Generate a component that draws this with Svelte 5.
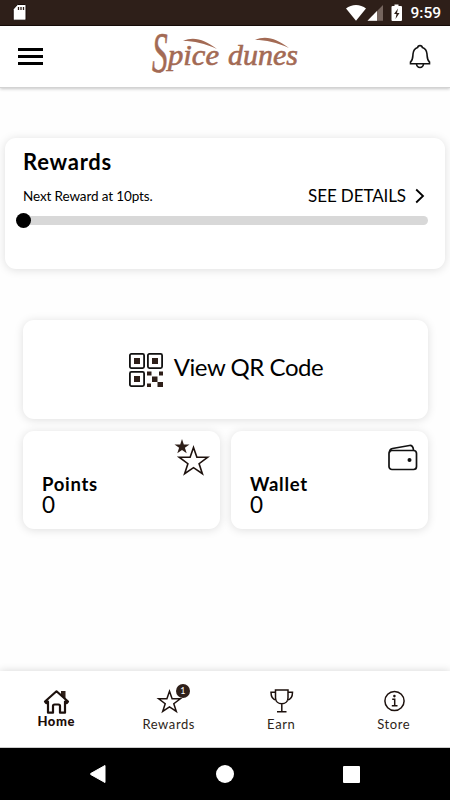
<script lang="ts">
	type Tab = { id: string; label: string; badge?: number };

	const tabs: Tab[] = [
		{ id: 'home', label: 'Home' },
		{ id: 'rewards', label: 'Rewards', badge: 1 },
		{ id: 'earn', label: 'Earn' },
		{ id: 'store', label: 'Store' }
	];

	let active = $state('home');
	let points = $state(0);
	let wallet = $state(0);

	const nextReward = 10;
	const progress = $derived(Math.min(points / nextReward, 1) * 100);
</script>

<div class="screen">
	<div class="status">
		<svg class="sd" width="16" height="20" viewBox="0 0 16 20">
			<path d="M5.6 1.5H13q1 0 1 1v13.700q0 1-1 1H2.200q-1 0-1-1V6.200z" fill="#fff" stroke="#170b08" />
			<path d="M6.500 4v3M9 4v3M11.500 4v3" stroke="#2e1f19" stroke-width="1.300" />
		</svg>
		<svg width="58" height="20" viewBox="0 0 58 20">
			<path d="M0 5.500C5.500 .8 14.500 .8 20 5.500L10 17.700z" fill="#fff" />
			<path d="M37 2v15.700H21.500z" fill="#75655e" />
			<path d="M31 8v9.700h-9.500z" fill="#fff" />
			<path d="M48.500 1.500h4v1.500h2.500q1 0 1 1v13q0 1-1 1h-8.500q-1 0-1-1V4q0-1 1-1h2z" fill="#fff" />
			<path d="M52 5.500l-4 5.500h2.500l-1 5 4-6h-2.500z" fill="#2e1f19" />
		</svg>
		<span class="time">9:59</span>
	</div>

	<header>
		<button type="button" class="menu" aria-label="Menu">
			<i></i><i></i><i></i>
		</button>
		<svg class="logo" width="150" height="44" viewBox="0 0 150 44" aria-label="Spice dunes">
			<g fill="#a36a54" stroke="#a36a54" stroke-width=".6">
				<text transform="translate(1 38) scale(.56 1)" font-size="56">S</text>
				<text x="17" y="31" font-size="29" textLength="51" lengthAdjust="spacingAndGlyphs">pice</text>
				<text x="77" y="31" font-size="29" textLength="70" lengthAdjust="spacingAndGlyphs">dunes</text>
			</g>
			<path
				d="M32 7C43 2 54 6 66 15C54 9.500 43 7 32 7zM104 6C115 1 126 5 138 14C126 8.500 115 6 104 6z"
				fill="#a36a54"
			/>
		</svg>
		<button type="button" class="bell" aria-label="Notifications">
			<svg width="24" height="28" viewBox="0 0 24 28" fill="none" stroke="#111" stroke-width="1.600">
				<path
					d="M2.500 20.700V19C5 17 4.700 14.500 5 11C5.300 7.500 7 5.300 9.700 4.500C9.900 2 14.100 2 14.300 4.500C17 5.300 18.700 7.500 19 11C19.300 14.500 19 17 21.500 19v1.700z"
				/>
				<path d="M8.500 21c.5 4.600 6.500 4.600 7 0" />
			</svg>
		</button>
	</header>

	<main>
		<section class="card rewards">
			<h2>Rewards</h2>
			<div class="row">
				<span class="next">Next Reward at {nextReward}pts.</span>
				<a href="#details" class="details">
					<span>SEE DETAILS</span>
					<svg width="10" height="16" viewBox="0 0 10 16" fill="none" stroke="#000" stroke-width="1.800">
						<path d="M1.200 1.500L8 8l-6.800 6.500" />
					</svg>
				</a>
			</div>
			<div class="track">
				<span class="thumb" style="left: {progress}%"></span>
			</div>
		</section>

		<button type="button" class="card qr">
			<svg width="34" height="34" viewBox="0 0 34 34" fill="none" stroke="#111" stroke-width="1.800">
				<rect x=".9" y=".9" width="14.200" height="14.200" rx="1.500" />
				<rect x="18.900" y=".9" width="14.200" height="14.200" rx="1.500" />
				<rect x=".9" y="18.900" width="14.200" height="14.200" rx="1.500" />
				<path
					d="M5 5h6v6H5zM23 5h6v6h-6zM5 23h6v6H5zM18 18.500h4.500v4H18zM30 18.500h4v4h-4zM23 23.500h5.500v5.500H23zM18 30.500h4v3.500h-4zM28.500 29h5.500v5h-5.500z"
					fill="#2e1f19"
					stroke="none"
				/>
			</svg>
			<span>View QR Code</span>
		</button>

		<div class="tiles">
			<section class="card tile">
				<svg class="stars" width="36" height="38" viewBox="0 0 36 38">
					<path
						d="M8 0l1.800 5.400h5.700l-4.600 3.400 1.800 5.400L8 10.900l-4.700 3.300 1.800-5.400L.5 5.400h5.700z"
						fill="#2e1f19"
					/>
					<path
						d="M19.500 8.500l3.400 9.700h10.900l-8.700 6.500 3.300 10-8.900-6-8.900 6 3.300-10-8.700-6.500h10.900z"
						fill="none"
						stroke="#1d110d"
						stroke-width="1.600"
					/>
				</svg>
				<h3>Points</h3>
				<p>{points}</p>
			</section>
			<section class="card tile">
				<svg class="purse" width="30" height="27" viewBox="0 0 30 27" fill="none" stroke="#111" stroke-width="1.700">
					<rect x="1" y="6.500" width="27.500" height="19" rx="3" />
					<path d="M1.500 8.500Q1.500 5 4.500 4.500L21.500 1.500Q25 1 25.500 6" />
					<circle cx="21.500" cy="16" r="2" fill="#111" stroke="none" />
				</svg>
				<h3>Wallet</h3>
				<p>{wallet}</p>
			</section>
		</div>
	</main>

	<nav>
		{#each tabs as tab}
			<button type="button" class="tab" class:active={active === tab.id} onclick={() => (active = tab.id)}>
				<span class="icon">
					<svg width="28" height="26" viewBox="0 0 28 26" fill="none" stroke="#1d110d" stroke-width="1.500">
						{#if tab.id === 'home'}
							<path d="M19 3h4.500v8L19 7z" fill="#2e1f19" stroke="none" />
							<path
								d="M3 13.500L14.500 3.300L26 13.500l-1.200 1.500L23 13.700V24.700h-5v-6.700q0-1.500-1.500-1.500h-4q-1.500 0-1.500 1.500v6.700H6V13.700L4.200 15z"
								stroke-width="2.200"
								stroke-linejoin="round"
							/>
						{:else if tab.id === 'rewards'}
							<path d="M14.500 3.200l2.600 7.600h8.200l-6.500 4.900 2.500 7.700-6.800-4.600-6.800 4.600 2.500-7.700-6.500-4.900h8.200z" />
						{:else if tab.id === 'earn'}
							<path
								d="M8.500 2h12.500v7.800c0 8-12.500 8-12.500 0zM14.800 15.900v7.600M10 23.700h9.500M8.500 4.300H4c0 5 2 7.500 5.500 8M21 4.300h4.500c0 5-2 7.500-5.500 8"
							/>
						{:else}
							<circle cx="14.500" cy="13" r="9.600" />
							<path d="M12.200 11.300h2.500v6.300M11.800 17.700h5.700" />
							<circle cx="14.400" cy="8.100" r="1.300" fill="#1d110d" stroke="none" />
						{/if}
					</svg>
					{#if tab.badge}
						<span class="badge">{tab.badge}</span>
					{/if}
				</span>
				<span class="label">{tab.label}</span>
			</button>
		{/each}
	</nav>

	<div class="system">
		<svg width="16" height="18" viewBox="0 0 16 18"><path d="M15 .5v17L.7 9.500V8.500z" fill="#fff" stroke="#fff" stroke-linejoin="round" /></svg>
		<svg width="18" height="18" viewBox="0 0 18 18"><circle cx="9" cy="9" r="9" fill="#fff" /></svg>
		<svg width="17" height="17" viewBox="0 0 17 17"><rect width="17" height="17" rx="1" fill="#fff" /></svg>
	</div>
</div>

<style>
	:global(*) {
		box-sizing: border-box;
	}
	:global(body) {
		margin: 0;
		background: #fff;
	}
	.screen {
		height: 800px;
		display: flex;
		flex-direction: column;
		overflow: hidden;
		color: #000;
		background: #fefefe;
		font-family: Lato, 'Liberation Sans', sans-serif;
	}
	svg {
		display: block;
		flex: none;
	}
	button {
		border: none;
		padding: 0;
		background: none;
		color: inherit;
		font-family: inherit;
		cursor: pointer;
	}
	.status {
		height: 26px;
		flex: none;
		display: flex;
		align-items: center;
		padding: 1px 9px 0 12px;
		background: #2e1f19;
		border-bottom: 1px solid #160c09;
		color: #fff;
	}
	.sd {
		margin-right: auto;
	}
	.time {
		margin-left: 6px;
		font: 500 15.5px Roboto, sans-serif;
	}
	header {
		height: 62px;
		flex: none;
		display: flex;
		align-items: center;
		justify-content: space-between;
		padding: 0 18px;
		background: #fff;
		border-bottom: 1px solid #d3d3d3;
		box-shadow: 0 1px 3px rgba(0, 0, 0, 0.22);
	}
	.menu {
		display: flex;
		flex-direction: column;
		gap: 4px;
	}
	.menu i {
		width: 25px;
		height: 3px;
		background: #000;
	}
	.logo {
		margin-top: -1px;
		overflow: visible;
		font-family: 'Liberation Serif', serif;
		font-style: italic;
	}
	main {
		flex: 1;
		display: flex;
		flex-direction: column;
		padding: 50px 22px 0 23px;
	}
	.card {
		background: #fff;
		border-radius: 11px;
		box-shadow: 0 1px 10px rgba(0, 0, 0, 0.13);
	}
	.rewards {
		height: 131px;
		margin: 0 -17px 51px -18px;
		padding: 11px 17px 0 18px;
	}
	h2 {
		margin: 0;
		font-size: 22px;
		line-height: 26px;
		letter-spacing: 0.75px;
	}
	.row {
		height: 41px;
		display: flex;
		align-items: center;
		justify-content: space-between;
	}
	.next {
		font-size: 13.5px;
		letter-spacing: -0.12px;
	}
	.details {
		display: flex;
		align-items: center;
		gap: 9px;
		padding-right: 3px;
		color: #000;
		font-size: 17px;
		letter-spacing: -0.1px;
		text-decoration: none;
	}
	.track {
		position: relative;
		height: 9px;
		border-radius: 5px;
		background: #d8d8d8;
	}
	.thumb {
		position: absolute;
		top: -3px;
		width: 15px;
		height: 15px;
		margin-left: -7px;
		border-radius: 50%;
		background: #000;
	}
	.qr {
		height: 99px;
		flex: none;
		display: flex;
		align-items: center;
		justify-content: center;
		gap: 11px;
		padding-left: 1px;
		font-size: 24px;
	}
	.qr span {
		margin-top: -7px;
		letter-spacing: -0.45px;
	}
	.tiles {
		display: grid;
		grid-template-columns: 1fr 1fr;
		gap: 11px;
		margin-top: 12px;
	}
	.tile {
		position: relative;
		height: 98px;
		padding: 42px 19px 0;
	}
	.stars {
		position: absolute;
		top: 8px;
		right: 10px;
	}
	.purse {
		position: absolute;
		top: 13px;
		right: 10px;
	}
	h3 {
		margin: 0;
		font-size: 18.5px;
		line-height: 22px;
		letter-spacing: 0.7px;
	}
	p {
		margin: 0;
		font-size: 22.5px;
		line-height: 20px;
	}
	nav {
		height: 77px;
		flex: none;
		display: grid;
		grid-template-columns: repeat(4, 1fr);
		background: #fff;
		border-bottom: 1px solid #ccc;
		box-shadow: 0 0 8px rgba(0, 0, 0, 0.16);
	}
	.tab {
		display: flex;
		flex-direction: column;
		align-items: center;
		padding-top: 17px;
		color: #2e1f19;
		font-size: 13px;
		letter-spacing: 0.6px;
	}
	.icon {
		position: relative;
	}
	.label {
		margin-top: 1px;
		line-height: 18px;
	}
	.active .label {
		margin-top: -2px;
		color: #1d0d08;
		font-weight: 900;
	}
	.badge {
		position: absolute;
		top: -4px;
		right: -7px;
		width: 14px;
		height: 14px;
		border-radius: 50%;
		background: #2e1f19;
		color: #fff;
		font-size: 9px;
		line-height: 14px;
		letter-spacing: 0;
		text-align: center;
	}
	.system {
		height: 52px;
		flex: none;
		display: flex;
		align-items: center;
		justify-content: space-between;
		padding: 0 90px;
		background: #000;
	}
</style>
